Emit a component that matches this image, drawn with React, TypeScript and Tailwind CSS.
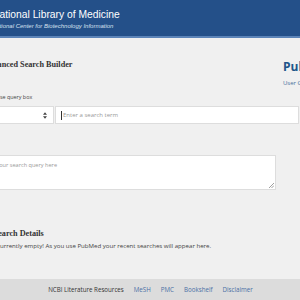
export default function App() {
    return (
        <div className="w-[300px] h-[300px] overflow-hidden bg-[#f0f0f0] flex flex-col font-['Open_Sans',sans-serif]">
            <header className="h-[38px] shrink-0 bg-[#245089] border-b-2 border-[#5c84b8] flex flex-col justify-center pt-[3px]">
                <div className="-ml-[8px] text-[10.3px] leading-[12px] text-white font-['Liberation_Sans',sans-serif] whitespace-nowrap">National Library of Medicine</div>
                <div className="-ml-[8px] mt-[1px] text-[6px] leading-[8px] italic text-[#d6e0ef] font-['Liberation_Sans',sans-serif] whitespace-nowrap">National Center for Biotechnology Information</div>
            </header>

            <main className="flex-1 relative">
                <div className="-ml-[17px] pt-[21px]">
                    <h1 className="text-[8.2px] leading-[12px] font-bold text-[#333] font-['Liberation_Serif',serif] whitespace-nowrap">Advanced Search Builder</h1>
                    <div className="mt-[22px] ml-[13px] text-[5.4px] leading-[9px] text-[#444] whitespace-nowrap">Use query box</div>
                    <div className="mt-[4px] w-[316px] flex gap-[1px]">
                        <div className="w-[71px] h-[18px] bg-white border border-[#ddd] flex items-center justify-end pr-[6px]">
                            <svg width="4" height="7" viewBox="0 0 5 8"><path d="M2.5 0 5 3H0z M2.5 8 5 5H0z" fill="#444" /></svg>
                        </div>
                        <div className="flex-1 h-[18px] bg-white border border-[#ddd] flex items-center pl-[5px] text-[6px] text-[#999] whitespace-nowrap">
                            <span className="w-px h-[9px] bg-[#333] mr-[1px]" />Enter a search term
                        </div>
                    </div>

                    <div className="mt-[31px] -ml-[9px] w-[302px] h-[35px] bg-white border border-[#ddd] pl-[6px] pt-[5px] text-[5.6px] leading-[9px] text-[#999] whitespace-nowrap relative">
                        Enter your search query here
                        <svg className="absolute right-[1px] bottom-[1px]" width="5" height="5" viewBox="0 0 5 5"><path d="M5 0 0 5M5 2.5 2.5 5" stroke="#888" strokeWidth="0.8" /></svg>
                    </div>
                </div>

                <div className="-ml-[50px] mt-[38px]">
                    <h2 className="text-[8.2px] leading-[12px] font-bold text-[#333] font-['Liberation_Serif',serif] whitespace-nowrap">History and Search Details</h2>
                    <p className="mt-[1px] ml-[5px] text-[6.1px] leading-[9px] text-[#444] whitespace-nowrap">Your history is currently empty! As you use PubMed your recent searches will appear here.</p>
                </div>

                <div className="absolute left-[283px] top-[22px] whitespace-nowrap">
                    <div className="text-[12px] font-bold text-[#20558a] leading-[14px]">PubMed</div>
                    <div className="mt-[5px] text-[6px] leading-[8px] text-[#4a6f9c]">User Guide</div>
                </div>
            </main>

            <footer className="h-[21px] shrink-0 bg-[#dcdcdc] flex items-center justify-center pl-[1px] gap-[10px] text-[6.2px] whitespace-nowrap">
                <span className="text-[#333]">NCBI Literature Resources</span>
                <span className="text-[#4a6fa5]">MeSH</span>
                <span className="text-[#4a6fa5]">PMC</span>
                <span className="text-[#4a6fa5]">Bookshelf</span>
                <span className="text-[#4a6fa5]">Disclaimer</span>
            </footer>
        </div>
    );
}
